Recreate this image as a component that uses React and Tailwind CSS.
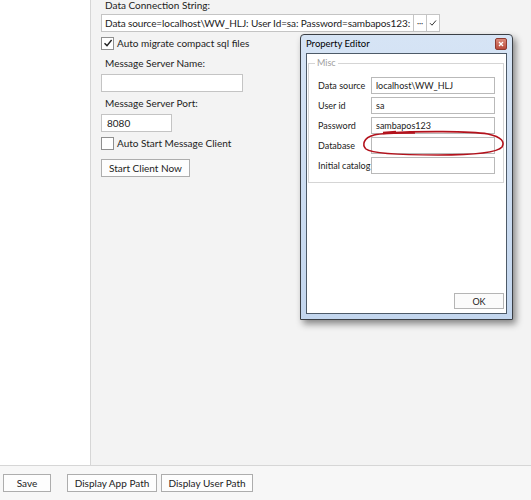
import React from "react";

function Check({ checked }) {
  return (
    <div className="w-[13px] h-[13px] border border-[#8f8f8f] bg-white flex items-center justify-center shrink-0">
      {checked && (
        <svg width="10" height="10" viewBox="0 0 10 10">
          <path d="M1.5 5.2 L4 7.6 L8.6 2" fill="none" stroke="#222" strokeWidth="1.4" />
        </svg>
      )}
    </div>
  );
}

function Btn({ children, className = "" }) {
  return (
    <div className={"h-[18px] border border-[#adadad] bg-[#fdfdfd] flex items-center justify-center leading-none whitespace-nowrap " + className}>
      {children}
    </div>
  );
}

function Row({ label, value }) {
  return (
    <div className="flex items-center h-[17px]">
      <div className="w-[53px] text-[9px] leading-none whitespace-nowrap">{label}</div>
      <div className="w-[124px] h-[17px] border border-[#b9b9b9] bg-white flex items-center pl-[4px] text-[9px] leading-none">
        {value}
      </div>
    </div>
  );
}

export default function App() {
  return (
    <div className="relative w-[531px] h-[500px] overflow-hidden font-['Lato',sans-serif] text-[10px] text-[#222]">
      <div className="flex h-[465px]">
        <div className="w-[91px] bg-white border-r border-[#d6d6d6]" />
        <div className="flex-1 bg-[#f3f3f3] pl-[10px] flex flex-col">
          <div className="pl-[4px] h-[14px] leading-[12px] -mt-[1px] whitespace-nowrap">Data Connection String:</div>
          <div className="flex mt-[1px] h-[18px]">
            <div className="w-[313px] h-[18px] border border-[#c4c4c4] bg-white flex items-center pl-[3px] whitespace-nowrap overflow-hidden leading-none tracking-[-0.1px]">
              Data source=localhost\WW_HLJ: User Id=sa: Password=sambapos123:
            </div>
            <div className="w-[13px] h-[18px] border-y border-r border-[#c4c4c4] bg-white flex items-center justify-center text-[8px] leading-none">···</div>
            <div className="w-[13px] h-[18px] border-y border-r border-[#c4c4c4] bg-white flex items-center justify-center">
              <svg width="8" height="8" viewBox="0 0 8 8"><path d="M1 4.2 L3 6.2 L7 1.5" fill="none" stroke="#333" strokeWidth="1" /></svg>
            </div>
          </div>
          <div className="flex items-center gap-[3px] mt-[4px] h-[14px]">
            <Check checked />
            <span className="leading-none">Auto migrate compact sql files</span>
          </div>
          <div className="pl-[4px] mt-[6px] h-[14px] leading-[14px]">Message Server Name:</div>
          <div className="mt-[4px] w-[142px] h-[18px] border border-[#c4c4c4] bg-white" />
          <div className="pl-[4px] mt-[4px] h-[14px] leading-[14px]">Message Server Port:</div>
          <div className="mt-[4px] w-[71px] h-[18px] border border-[#c4c4c4] bg-white flex items-center pl-[5px] leading-none">8080</div>
          <div className="flex items-center gap-[3px] mt-[4px] h-[14px]">
            <Check />
            <span className="leading-none">Auto Start Message Client</span>
          </div>
          <Btn className="mt-[9px] w-[89px]">Start Client Now</Btn>
        </div>
      </div>
      <div className="h-[35px] border-t border-[#d6d6d6] bg-[#f7f7f7] flex items-start pt-[8px] pl-[3px]">
        <Btn className="w-[48px]">Save</Btn>
        <Btn className="w-[90px] ml-[16px]">Display App Path</Btn>
        <Btn className="w-[92px] ml-[4px]">Display User Path</Btn>
      </div>

      {/* Property Editor window */}
      <div className="absolute left-[300px] top-[34px] w-[213px] h-[286px] border border-[#3b3f45] bg-gradient-to-b from-[#d6e4f5] to-[#c3d6ee] rounded-t-[4px] shadow-[3px_4px_7px_rgba(0,0,0,0.45)] flex flex-col px-[5px] pb-[5px]">
        <div className="h-[18px] flex items-center justify-between">
          <span className="text-[9.5px] leading-none text-black">Property Editor</span>
          <div className="w-[12px] h-[12px] rounded-[2px] bg-gradient-to-b from-[#dc8a7a] to-[#b94a3c] border border-[#8d3a30] flex items-center justify-center">
            <svg width="6" height="6" viewBox="0 0 6 6"><path d="M1 1 L5 5 M5 1 L1 5" stroke="white" strokeWidth="1.3" /></svg>
          </div>
        </div>
        <div className="flex-1 bg-white border border-[#4d5a68] flex flex-col">
          <div className="relative mt-[9px] ml-[1px] mr-[2px] h-[120px] border border-[#d5d5d5] flex flex-col gap-[3px] pl-[9px] pt-[13px]">
            <div className="absolute -top-[7px] left-[6px] bg-white px-[2px] text-[9px] leading-[12px] text-[#a0a0a0]">Misc</div>
            <Row label="Data source" value="localhost\WW_HLJ" />
            <Row label="User id" value="sa" />
            <Row label="Password" value="sambapos123" />
            <Row label="Database" value="" />
            <Row label="Initial catalog" value="" />
          </div>
          <div className="flex-1" />
          <div className="flex justify-end pr-[2px] pb-[4px]">
            <div className="w-[50px] h-[16px] border border-[#b5b5b5] bg-[#fbfbfb] flex items-center justify-center text-[9px] leading-none">OK</div>
          </div>
        </div>
      </div>

      {/* red hand-drawn ellipse */}
      <svg className="absolute left-[360px] top-[128px]" width="148" height="30" viewBox="0 0 148 30">
        <path
          d="M25 5 C60 3 110 3 128 6 C142 9 145 14 142 19 C137 25 112 27 78 27 C44 27 12 26 6 21 C2 17 3 10 14 7 C22 5 40 5 55 5"
          fill="none" stroke="#b3121c" strokeWidth="1.6" />
        <path d="M23 5 L36 4" fill="none" stroke="#b3121c" strokeWidth="2.4" />
      </svg>
    </div>
  );
}
